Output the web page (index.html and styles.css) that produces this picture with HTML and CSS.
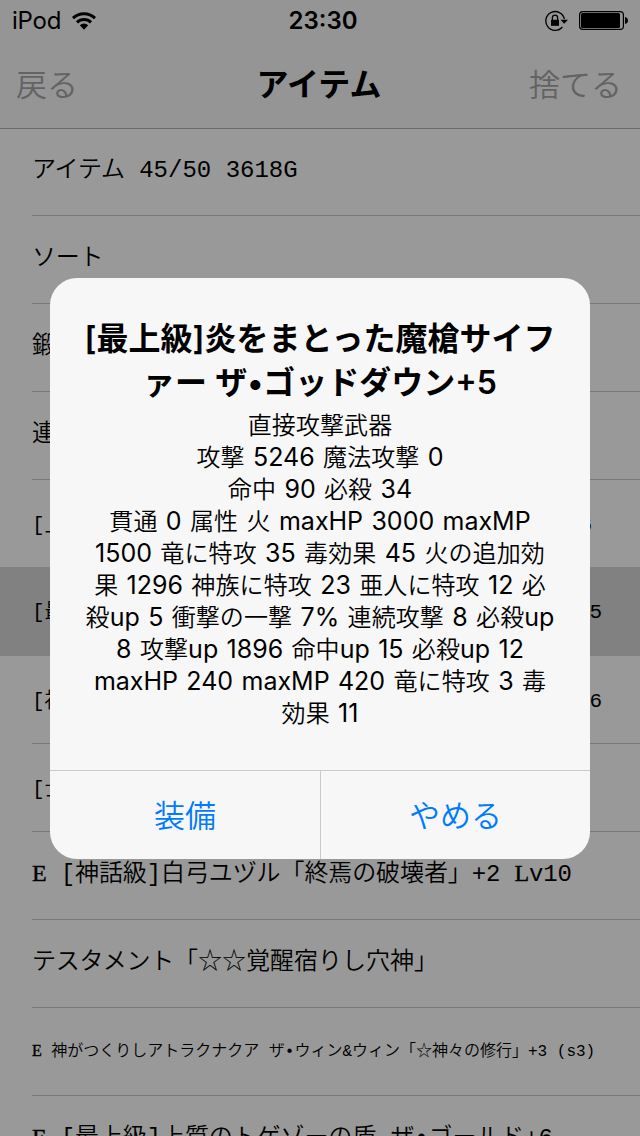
FILE: index.html
```
<!DOCTYPE html>
<html lang="ja">
<head>
  <meta charset="UTF-8">
  <title>アイテム</title>
  <link rel="stylesheet" href="styles.css">
</head>
<body>

  <header class="top">
    <div class="status">
      <div class="carrier">
        <span>iPod</span>
        <svg class="wifi" width="26" height="20" viewBox="0 0 26 20">
          <path d="M2 7.2A16 16 0 0 1 24 7.2" fill="none" stroke="#000" stroke-width="3"/>
          <path d="M6 11.4a10.2 10.2 0 0 1 14 0" fill="none" stroke="#000" stroke-width="3"/>
          <path d="M8.8 14.2a6.2 6.2 0 0 1 8.4 0L13 18.8z"/>
        </svg>
      </div>
      <time class="clock">23:30</time>
      <div class="indicators">
        <svg class="lock" width="24" height="22" viewBox="0 0 24 22">
          <path d="M20.4 9A9.4 9.4 0 1 0 18.4 17" fill="none" stroke="#000" stroke-width="1.3"/>
          <path d="M16.5 9.8h7.5l-3.8 4z"/>
          <rect x="7" y="9.8" width="8" height="6"/>
          <path d="M8.4 10V7.7a2.6 2.6 0 0 1 5.2 0V10" fill="none" stroke="#000" stroke-width="1.3"/>
        </svg>
        <svg class="battery" width="50" height="20" viewBox="0 0 50 20">
          <rect x=".6" y=".6" width="43.8" height="17.8" rx="3.2" fill="none" stroke="#000" stroke-width="1.2"/>
          <rect x="2" y="2" width="39" height="15" rx="1.5"/>
          <path d="M46 6c1.8.3 3 1.700 3 3.500S47.800 12.700 46 13z"/>
        </svg>
      </div>
    </div>
    <nav class="nav">
      <span class="nav-btn">戻る</span>
      <h1>アイテム</h1>
      <span class="nav-btn">捨てる</span>
    </nav>
  </header>

  <ul class="list">
    <li><span class="kana">アイテム</span> 45/50 3618G</li>
    <li><span class="kana">ソート</span></li>
    <li>鍛</li>
    <li>連</li>
    <li class="fit short"><span>[上</span><span>6</span></li>
    <li class="fit selected"><span>[最</span><span>5</span></li>
    <li class="fit"><span>[神</span><span>6</span></li>
    <li class="fit">[士</li>
    <li class="tight"><span class="slab">E</span> [神話級]白弓ユヅル「終焉の破壊者」+2 <span class="slab">L</span>v10</li>
    <li><span class="kana">テスタメント</span>「☆☆覚醒宿りし穴神」</li>
    <li class="small"><span class="slab">E</span> 神がつくりしアトラクナクア ザ•ウィン&amp;ウィン「☆神々の修行」+3 (s3)</li>
    <li class="tight"><span class="slab">E</span> [最上級]上質のトゲゾーの盾 ザ•ゴールド+6</li>
  </ul>

  <div class="alert">
    <div class="alert-body">
      <h2>[最上級]炎をまとった魔槍サイフ<br>ァー ザ•ゴッドダウン+5</h2>
      <p>
        <span>直接攻撃武器</span><br>
        <span>攻撃</span> 5246 <span>魔法攻撃</span> 0<br>
        <span>命中</span> 90 <span>必殺</span> 34<br>
        <span>貫通</span> 0 <span>属性</span> <span>火</span> maxHP 3000 maxMP<br>
        1500 <span>竜に特攻</span> 35 <span>毒効果</span> 45 <span>火の追加効</span><br>
        <span>果</span> 1296 <span>神族に特攻</span> 23 <span>亜人に特攻</span> 12 <span>必</span><br>
        <span>殺</span>up 5 <span>衝撃の一撃</span> 7% <span>連続攻撃</span> 8 <span>必殺</span>up<br>
        8 <span>攻撃</span>up 1896 <span>命中</span>up 15 <span>必殺</span>up 12<br>
        maxHP 240 maxMP 420 <span>竜に特攻</span> 3 <span>毒</span><br>
        <span>効果</span> 11
      </p>
    </div>
    <div class="alert-actions">
      <div class="action">装備</div>
      <div class="action">やめる</div>
    </div>
  </div>

</body>
</html>
```
FILE: styles.css
```
* {
  box-sizing: border-box;
}

body {
  margin: 0;
  width: 640px;
  height: 1136px;
  overflow: hidden;
  position: relative;
  background: #999;
  color: #000;
  font-family: Inter, "Noto Sans CJK JP", sans-serif;
}

.top {
  height: 129px;
  background: #959595;
  border-bottom: 1px solid #6b6b6b;
}

.status {
  height: 40px;
  display: grid;
  grid-template-columns: 1fr auto 1fr;
  align-items: center;
  padding: 1px 11px 0 12px;
  font-size: 24px;
}

.carrier {
  display: flex;
  align-items: center;
  gap: 10px;
  letter-spacing: -0.2px;
}

.clock {
  padding-left: 5px;
  font-weight: 600;
}

.indicators {
  display: flex;
  justify-content: flex-end;
  align-items: center;
  gap: 11px;
}

.nav {
  height: 84px;
  display: grid;
  grid-template-columns: 1fr auto 1fr;
  align-items: center;
  padding: 0 18px 0 16px;
}

.nav h1 {
  margin: 0;
  font-size: 32px;
  font-weight: 700;
}

.nav-btn {
  font-size: 31px;
  font-weight: 350;
  color: #636363;
}

.nav-btn:last-child {
  text-align: right;
}

.list {
  height: 1008px;
  list-style: none;
  margin: -1px 0 0;
  padding: 0;
  overflow: hidden;
  font-family: "Liberation Mono", "Noto Sans CJK JP", monospace;
  font-size: 24px;
  font-weight: 350;
}

.list li {
  height: 88px;
  padding-left: 32px;
  line-height: 86px;
  white-space: pre;
  background: linear-gradient(#7a7a7a, #7a7a7a) 32px 100% / 100% 1px no-repeat;
}

.list .fit {
  display: flex;
  justify-content: space-between;
  padding-right: 38px;
  font-size: 21px;
  line-height: 91px;
}

.list .short {
  padding-right: 48px;
}

.list .selected {
  margin-top: -1px;
  height: 89px;
  background: #818181;
}

.list .small {
  font-size: 16px;
  line-height: 89px;
}

.list .tight {
  letter-spacing: -0.1px;
}

.kana {
  letter-spacing: -0.2px;
}

.slab {
  display: inline-block;
  width: 0.6em;
  font-family: "Liberation Serif", serif;
  line-height: 1;
  -webkit-text-stroke: 0.4px #000;
}

.alert {
  position: absolute;
  left: 50px;
  top: 278px;
  width: 540px;
  height: 581px;
  display: flex;
  flex-direction: column;
  border-radius: 27px;
  background: #f7f7f7;
  overflow: hidden;
}

.alert-body {
  flex: 1;
  padding-top: 39px;
  text-align: center;
  white-space: nowrap;
}

.alert h2 {
  margin: 0;
  font-size: 32px;
  line-height: 44px;
  font-weight: 600;
}

.alert p {
  margin: 4px 0 0;
  font-size: 25px;
  line-height: 32px;
  word-spacing: 1.3px;
}

.alert p span {
  font-size: 24px;
  line-height: 1;
  font-weight: 350;
  letter-spacing: 0.1px;
}

.alert-actions {
  display: grid;
  grid-template-columns: 1fr 1fr;
  height: 89px;
  border-top: 1px solid #cacace;
}

.action {
  display: flex;
  align-items: center;
  justify-content: center;
  padding-bottom: 4px;
  font-size: 31px;
  font-weight: 350;
  color: #007aff;
}

.action + .action {
  border-left: 1px solid #cacace;
}
```
